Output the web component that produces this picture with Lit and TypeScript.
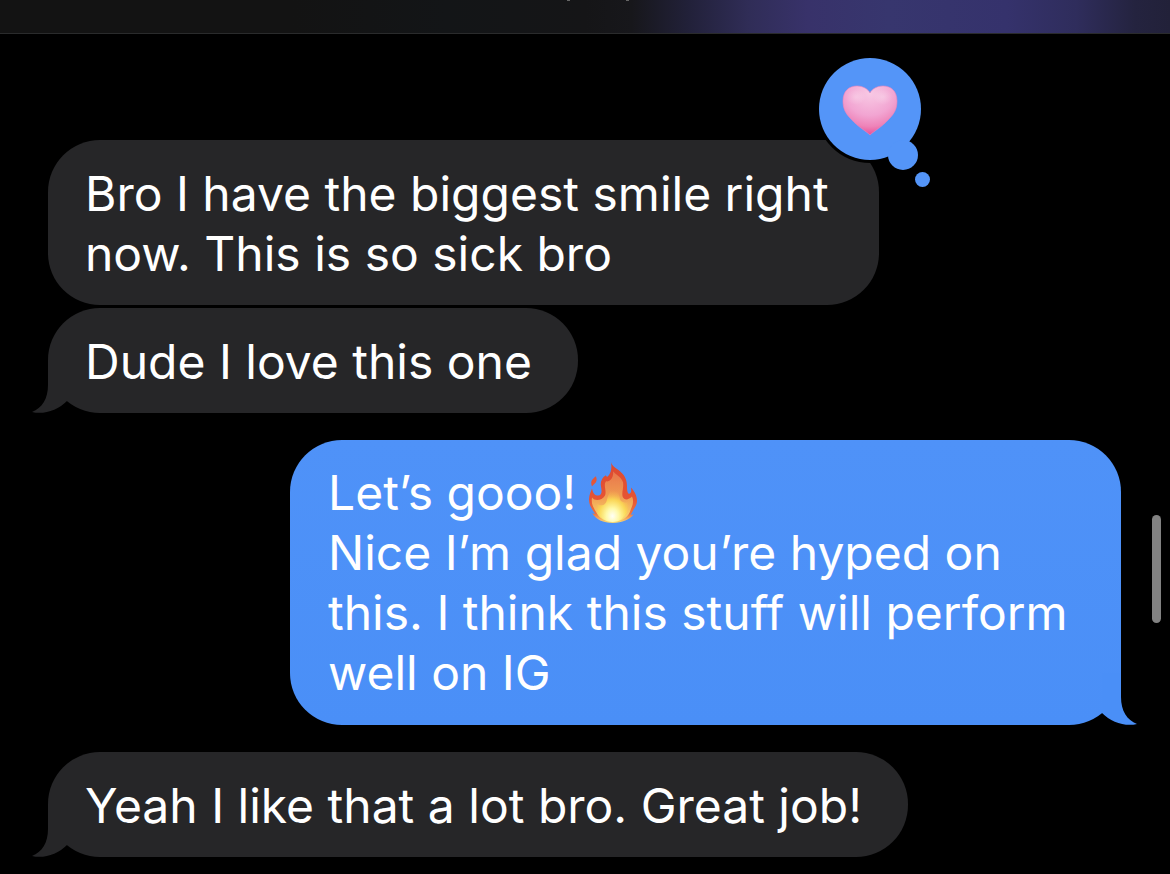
import { LitElement, html, svg, css, nothing } from "lit";
import { customElement, property } from "lit/decorators.js";

const fire = html`<svg class="fire" viewBox="0 0 50 60" preserveAspectRatio="none" role="img" aria-label="fire">
  <defs>
    <linearGradient id="fo" x1="0" y1="0" x2="0" y2="1">
      <stop offset="0" stop-color="#dc4a30" />
      <stop offset="0.6" stop-color="#e65334" />
      <stop offset="0.85" stop-color="#ec7440" />
      <stop offset="1" stop-color="#f8dc78" />
    </linearGradient>
    <linearGradient id="fm" x1="0" y1="0" x2="0" y2="1">
      <stop offset="0" stop-color="#e8744c" />
      <stop offset="0.5" stop-color="#f09c52" />
      <stop offset="1" stop-color="#fbe070" />
    </linearGradient>
    <radialGradient id="fi" cx="0.5" cy="0.85" r="0.65">
      <stop offset="0" stop-color="#fffff6" />
      <stop offset="0.3" stop-color="#fff9a8" />
      <stop offset="0.65" stop-color="#fbdc55" stop-opacity="0.85" />
      <stop offset="1" stop-color="#f6b050" stop-opacity="0" />
    </radialGradient>
    <filter id="soft"><feGaussianBlur stdDeviation="0.7" /></filter>
  </defs>
  <path fill="url(#fo)" d="M23 0C24 4 28 6 32 9C38 14 39 19 39 24C39 29 40 32 42 31C44 29 43 27 43 25C46 28 49 33 49 38C49 43 46 45 45 48C44 50 43 51 43 52C44 52 45 52 46 51C42 57 34 60 25 60C15 60 8 57 4 50C5 51 6 51 7 51C5 47 1 44 1 37C1 32 3 29 4 26C5 31 7 33 10 33C14 33 14 29 13 24C12 20 14 15 18 13C18 14 19 15 20 14C23 11 24 6 23 0Z" />
  <path fill="#e45638" d="M8 14C9 18 9 19 6 22C5 23 4 24 4 24C2 19 4 17 8 14Z" />
  <g filter="url(#soft)">
    <path fill="url(#fm)" d="M25 9C27 12 33 14 35 20C36 26 33 31 35 35C37 38 41 37 44 34C47 40 43 45 42 49C39 56 32 59 25 59C16 59 11 55 8 49C5 44 3 41 4 35C7 39 14 38 17 33C19 28 15 23 18 19C22 20 26 15 25 9Z" />
    <path fill="url(#fi)" d="M25 20C27 27 32 31 32 37C35 41 38 40 40 39C42 47 38 52 34 56C29 60 20 60 15 56C10 52 7 47 9 41C13 44 18 43 19 37C20 31 25 27 25 20Z" />
  </g>
</svg>`;

const heart = svg`
  <defs>
    <radialGradient id="hg" cx="0.5" cy="0.15" r="0.9">
      <stop offset="0" stop-color="#f8c9e4" />
      <stop offset="0.5" stop-color="#f2a5d2" />
      <stop offset="0.75" stop-color="#ee83b8" />
      <stop offset="0.95" stop-color="#e94d96" />
    </radialGradient>
    <radialGradient id="hl" cx="0.5" cy="0.5" r="0.5">
      <stop offset="0" stop-color="#fff" stop-opacity="0.25" />
      <stop offset="1" stop-color="#fff" stop-opacity="0" />
    </radialGradient>
  </defs>
  <path fill="url(#hg)" stroke="#ec86bd" stroke-opacity="0.6" stroke-width="1"
    d="M54 80C50 76 42 72 35 64C29 58 27 53 27 46C27 36 33 31 41 31C47 31 52 34 54 38C56 34 61 31 67 31C75 31 81 36 81 46C81 53 79 58 73 64C66 72 58 76 54 80Z" />
  <ellipse cx="40" cy="42" rx="10" ry="8" fill="url(#hl)" />
  <ellipse cx="67" cy="42" rx="10" ry="8" fill="url(#hl)" />`;

@customElement("message-bubble")
export class MessageBubble extends LitElement {
  @property({ type: Boolean, reflect: true }) sent = false;
  @property({ type: Boolean, reflect: true }) wide = false;
  @property({ type: Boolean }) tail = false;
  @property({ type: Boolean }) loved = false;

  static styles = css`
    :host {
      --fill: #262628;
      display: block;
      position: relative;
      box-sizing: border-box;
      width: fit-content;
      max-width: 82%;
      padding: 24px 46px 21px 37px;
      border-radius: 52px;
      background: var(--fill);
      color: #fff;
      font-size: 48px;
      line-height: 60px;
    }
    :host([wide]) {
      min-width: min(831px, 82%);
    }
    :host([sent]) {
      --fill: #4a8ff7;
      align-self: flex-end;
      padding: 23px 46px 22px 38px;
      background: linear-gradient(#4f92f8, var(--fill));
    }
    .tail {
      position: absolute;
      left: -16px;
      bottom: 0;
      width: 36px;
      height: 52px;
      fill: var(--fill);
    }
    :host([sent]) .tail {
      left: auto;
      right: -16px;
      transform: scaleX(-1);
    }
    .reaction {
      position: absolute;
      right: -52px;
      top: -85px;
      width: 115px;
      height: 136px;
    }
  `;

  render() {
    return html`<slot></slot>
      ${this.tail
        ? html`<svg class="tail" viewBox="0 0 36 52" aria-hidden="true">
            <path d="M16 0V24C16 38 10 47 0 51C12 54 26 49 35 40V0Z" />
          </svg>`
        : nothing}
      ${this.loved
        ? html`<svg class="reaction" viewBox="0 0 115 136" role="img" aria-label="Loved">
            <circle cx="54" cy="54" r="54" fill="#000" />
            <g fill="#5495f8">
              <circle cx="54" cy="54" r="51" />
              <circle cx="87" cy="100" r="15" />
              <circle cx="106.5" cy="124.5" r="7.5" />
            </g>
            ${heart}
          </svg>`
        : nothing}`;
  }
}

@customElement("app-root")
export class AppRoot extends LitElement {
  static styles = css`
    :host {
      display: flex;
      flex-direction: column;
      position: relative;
      min-height: 100vh;
      overflow: hidden;
      background: #000;
      font-family: Inter, "Liberation Sans", sans-serif;
    }
    .bar {
      display: flex;
      justify-content: center;
      gap: 56px;
      height: 33px;
      padding-left: 26px;
      border-bottom: 1px solid #2a2b2c;
      background: linear-gradient(
        90deg,
        #131313 0%,
        #131313 25%,
        #131517 38%,
        #151517 50%,
        #17171b 54%,
        #22213a 59%,
        #302d57 64%,
        #38326a 69%,
        #37366e 76%,
        #35326c 86%,
        #2f2d5c 92%,
        #24233f 97%,
        #222139 100%
      );
    }
    .mark {
      width: 3px;
      height: 1px;
      background: #666;
    }
    .thread {
      display: flex;
      flex-direction: column;
      gap: 27px;
      padding: 106px 49px 17px 48px;
    }
    .group {
      display: flex;
      flex-direction: column;
      gap: 3px;
    }
    .fire {
      width: 50px;
      height: 61px;
      margin: -1px 0 0 12px;
      vertical-align: top;
    }
    .scrollbar {
      position: absolute;
      right: 9px;
      top: 515px;
      width: 9px;
      height: 108px;
      border-radius: 5px;
      background: #828282;
    }
  `;

  render() {
    return html`
      <header class="bar"><span class="mark"></span><span class="mark"></span></header>
      <main class="thread">
        <div class="group">
          <message-bubble wide loved>Bro I have the biggest smile right<br />now. This is so sick bro</message-bubble>
          <message-bubble tail>Dude I love this one</message-bubble>
        </div>
        <div class="group">
          <message-bubble wide sent tail>Let’s gooo!${fire}<br />Nice I’m glad you’re hyped on<br />this. I think this stuff will perform<br />well on IG</message-bubble>
        </div>
        <div class="group">
          <message-bubble tail>Yeah I like that a lot bro. Great job!</message-bubble>
        </div>
      </main>
      <div class="scrollbar"></div>
    `;
  }
}
